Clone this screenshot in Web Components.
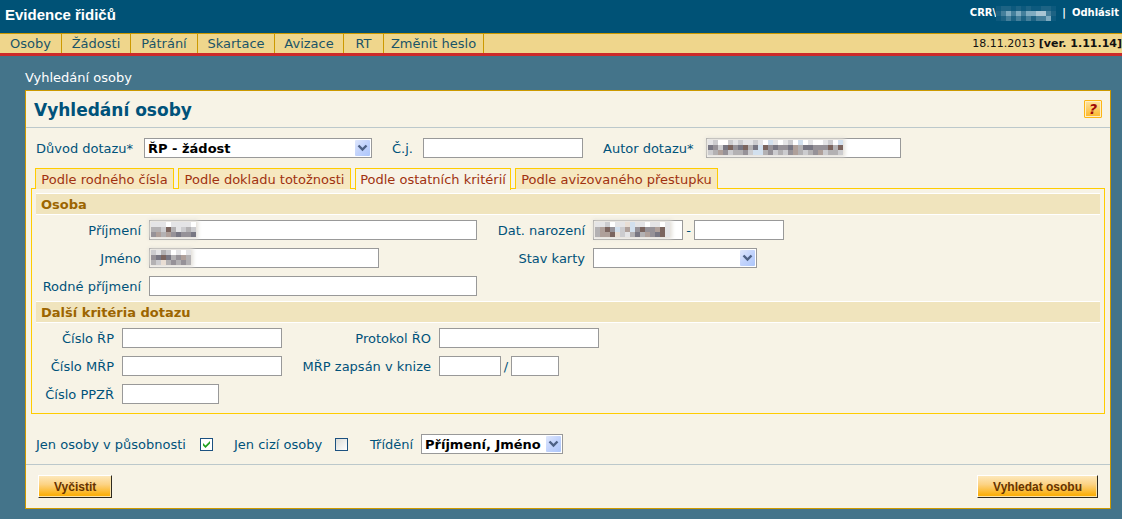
<!DOCTYPE html>
<html lang="cs">
<head>
<meta charset="utf-8">
<title>Evidence řidičů</title>
<style>
  html { background: #44748a; }
  body { margin: 0; font: 13px/18px "DejaVu Sans", Verdana, sans-serif; color: #00527a; }
</style>
</head>
<body>
<driver-app></driver-app>
<script>
const define = (name, html, setup) => {
  const tpl = document.createElement('template');
  tpl.innerHTML = '<style>*{box-sizing:border-box}</style>' + html;
  customElements.define(name, class extends HTMLElement {
    constructor() {
      super();
      this.attachShadow({ mode: 'open' }).append(tpl.content.cloneNode(true));
    }
    connectedCallback() { if (setup && !this.ready) { this.ready = true; setup(this, this.shadowRoot); } }
  });
};

/* Anonymised value: 5px mosaic cells, rows separated by "/" in the cells attribute */
const shades = {
  ' ': 'none', a: '#ffffff', b: '#e4e4e6', c: '#cccccf', d: '#b3b1b3', e: '#969298',
  f: '#787783', g: '#7b655f', h: '#d2e0ee', i: '#afa09a', j: '#e9ded4',
  p: '#1d6384', q: '#447f9b', r: '#7fabc0', s: '#a9c5d3', t: '#0d5a7e'
};
define('redacted-value', `
<style>
  :host { display: block; pointer-events: none; }
  :host([halo]) { background: rgb(240 240 239 / 90%); box-shadow: 0 0 4px 2px #e2dfd8; }
  svg { display: block; }
</style><svg aria-hidden="true" shape-rendering="crispEdges"></svg>`, (el, root) => {
  const rows = el.getAttribute('cells').split('/');
  const svg = root.querySelector('svg');
  svg.setAttribute('width', rows[0].length * 5);
  svg.setAttribute('height', rows.length * 5);
  svg.innerHTML = rows.map((row, y) => [...row].map((k, x) =>
    `<rect x="${x * 5}" y="${y * 5}" width="5" height="5" fill="${shades[k]}"/>`).join('')).join('');
});

define('app-header', `
<style>
  :host { display: flex; justify-content: space-between; align-items: flex-start; height: 33px; padding: 6px 3px 0 5px; background: #005276; color: #fff; }
  h1 { margin: 0; font: bold 15px/18px "Liberation Sans", Arial, sans-serif; }
  .user { display: flex; font-weight: bold; font-size: 10px; line-height: 14px; }
  redacted-value { margin-right: 6px; }
  a { color: inherit; text-decoration: none; margin-left: 6px; }
</style>
<h1>Evidence řidičů</h1>
<div class="user"><span>CRR\\</span><redacted-value cells="tpptptpttppt/pqrqrqrrssqp/tpqpqpqpqqrt"></redacted-value><span>|</span><a href="#logout">Odhlásit</a></div>`);

define('nav-item', `
<style>
  :host { display: block; border-right: 1px solid #c90; }
  a { display: block; text-align: center; white-space: nowrap; line-height: 19px; color: #1a5468; text-decoration: none; }
</style><a href="#"><slot></slot></a>`);

define('app-nav', `
<style>
  :host { display: flex; justify-content: space-between; border-top: 1px solid #c90; border-bottom: 3px solid #cc2a2a; background: #efd68c; }
  nav { display: grid; grid-template-columns: 62px 69px 67px 77px 69px 40px 100px; }
  .version { color: #111; font-size: 11px; line-height: 19px; }
</style>
<nav><nav-item>Osoby</nav-item><nav-item>Žádosti</nav-item><nav-item>Pátrání</nav-item><nav-item>Skartace</nav-item><nav-item>Avizace</nav-item><nav-item>RT</nav-item><nav-item>Změnit heslo</nav-item></nav>
<div class="version">18.11.2013 <b>[ver. 1.11.14]</b></div>`);

/* Text field: label and one input, or two inputs joined by a separator */
define('text-field', `
<style>
  :host { display: contents; }
  label { justify-self: var(--label-align, end); white-space: nowrap; height: 20px; line-height: 22px; }
  .control { display: flex; justify-self: start; height: 20px; line-height: 22px; position: relative; }
  input { height: 20px; border: 1px solid #999; border-radius: 0; background: #fff; margin: 0; padding: 0 3px; font: inherit; outline: none; }
  .sep { width: var(--sep, 11px); text-align: center; }
  ::slotted(*) { position: absolute; left: 2px; top: 2px; }
</style>
<label for="i"></label><div class="control"><input id="i" type="text"><slot></slot></div>`, (el, root) => {
  const label = el.getAttribute('label');
  root.querySelector('label').textContent = label;
  const input = root.querySelector('input');
  const [w1, w2] = el.getAttribute('widths').split(' ');
  input.style.width = w1 + 'px';
  if (w2) {
    const sep = document.createElement('span');
    sep.className = 'sep';
    sep.textContent = el.getAttribute('separator');
    const second = document.createElement('input');
    second.type = 'text';
    second.style.width = w2 + 'px';
    second.setAttribute('aria-label', label + ' 2');
    root.querySelector('.control').append(sep, second);
  }
});

define('select-field', `
<style>
  :host { display: contents; }
  label { justify-self: var(--label-align, end); white-space: nowrap; height: 20px; line-height: 22px; }
  .control { position: relative; justify-self: start; }
  select { display: block; appearance: none; width: 100%; height: 20px; border: 1px solid #999; border-radius: 0; background: #fff; color: #000; margin: 0; padding: 1px 18px 0 3px; font: bold 13px/17px "DejaVu Sans", Verdana, sans-serif; outline: none; }
  svg { position: absolute; right: 2px; top: 2px; pointer-events: none; }
</style>
<label for="s"></label><div class="control"><select id="s"><option></option></select>
<svg width="15" height="16" viewBox="0 0 15 16" aria-hidden="true">
  <defs><linearGradient id="g" x2="1" y2="1"><stop offset="0" stop-color="#dfe7fc"/><stop offset=".5" stop-color="#c2d3fc"/><stop offset="1" stop-color="#adc6fa"/></linearGradient></defs>
  <rect width="15" height="16" rx="1" fill="url(#g)"/>
  <path d="M3.500 5.500L7.500 9.500L11.500 5.500" fill="none" stroke="#4d6185" stroke-width="2.400"/>
</svg></div>`, (el, root) => {
  root.querySelector('label').textContent = el.getAttribute('label');
  root.querySelector('option').textContent = el.getAttribute('value') || '';
  root.querySelector('.control').style.width = el.getAttribute('width') + 'px';
});

define('check-field', `
<style>
  :host { display: contents; }
  label { white-space: nowrap; height: 20px; line-height: 22px; }
  .box { position: relative; width: 13px; height: 13px; }
  input { display: block; appearance: none; width: 13px; height: 13px; margin: 0; border: 1px solid #1c5180; background: linear-gradient(135deg, #dcdcd7, #fff); }
  svg { position: absolute; left: 3px; top: 3px; display: none; pointer-events: none; }
  input:checked { background: #fff; }
  input:checked + svg { display: block; }
</style>
<label for="c"></label><span class="box"><input id="c" type="checkbox"><svg width="7" height="7" viewBox="0 0 7 7" aria-hidden="true"><path d="M0 2L2.500 4.500L7 0V2.500L2.500 7L0 4.500Z" fill="#21a121"/></svg></span>`, (el, root) => {
  root.querySelector('label').textContent = el.getAttribute('label');
  root.querySelector('input').checked = el.hasAttribute('checked');
});

define('tab-button', `
<style>
  :host { display: block; }
  button { display: block; width: 100%; height: 21px; margin: 0; padding: 2px 0 0; border: 1px solid #fc0; border-bottom: 0; border-radius: 0; background: #f6e8c0; color: #a03210; font: 13px/18px "DejaVu Sans", Verdana, sans-serif; white-space: nowrap; }
  :host([active]) { position: relative; }
  :host([active]) button { background: #f7f3e6; padding-bottom: 1px; height: 22px; }
</style><button type="button" role="tab"><slot></slot></button>`, (el, root) =>
  root.querySelector('button').setAttribute('aria-selected', el.hasAttribute('active')));

define('form-section', `
<style>
  :host { display: block; }
  h3 { margin: 0; padding: 1px 5px 0; border: solid #fff; border-width: 1px 0; background: #f0e4bd; color: #9c6500; font-size: 13px; line-height: 19px; }
  .grid { display: grid; grid-template-columns: var(--columns); gap: 8px; padding: 5px 0; justify-content: start; }
</style><h3></h3><div class="grid"><slot></slot></div>`, (el, root) => {
  root.querySelector('h3').textContent = el.getAttribute('heading');
});

define('action-button', `
<style>
  :host { display: block; }
  button { display: block; height: 23px; margin: 0; padding: 0 15px; border: 1px solid; border-color: #fff #2e2a20 #2e2a20 #fff; border-radius: 0; box-shadow: inset -1px -1px #fbe3a8; background: linear-gradient(#fde8bb, #fcd384 40%, #fbaf0c 90%); color: #663300; font: bold 12px/20px "Liberation Sans", Arial, sans-serif; white-space: nowrap; }
</style><button type="button"><slot></slot></button>`);

define('help-button', `
<style>
  :host { display: block; }
  button { display: block; width: 18px; height: 18px; margin: 0; padding: 0; border: 1px solid #fdb515; border-radius: 1px; box-shadow: inset 0 0 0 1px #fdeec4; background: linear-gradient(#fde3a0, #fcb62a); color: #a00808; font: italic bold 14px/16px "DejaVu Sans", Verdana, sans-serif; }
</style><button type="button" aria-label="Nápověda">?</button>`);

define('search-panel', `
<style>
  :host { display: block; border: 1px solid #c90; background: #f7f3e6; }
  header { display: flex; justify-content: space-between; align-items: center; height: 37px; padding: 0 8px; border-bottom: 1px solid #bcc8cb; }
  h2 { margin: 0; padding-top: 2px; font-size: 17px; line-height: 24px; }
  .query { --label-align: start; display: grid; grid-template-columns: 100px 240px 23px 172px 95px auto; justify-content: start; gap: 8px; padding: 10px; }
  .tabs { display: grid; grid-template-columns: 139px 173px 156px 203px; gap: 4px; height: 20px; margin: 0 9px; }
  .pane { margin: 0 5px; padding: 4px; border: 1px solid #fc0; }
  .person { --columns: 105px 328px 100px auto; }
  .other { --columns: 78px 160px 141px auto; --sep: 10px; }
  .filters { --label-align: start; display: grid; grid-template-columns: 155px 25px 92px 26px 42px auto; justify-content: start; align-items: center; gap: 9px; padding: 20px 10px 10px; border-bottom: 1px solid #bcc8cb; }
  footer { display: flex; justify-content: space-between; padding: 10px 12px; }
</style>
<header><h2>Vyhledání osoby</h2><help-button></help-button></header>
<form>
  <div class="query">
    <select-field label="Důvod dotazu*" value="ŘP - žádost" width="228"></select-field>
    <text-field label="Č.j." widths="160"></text-field>
    <text-field label="Autor dotazu*" widths="195"><redacted-value halo cells="bcaacbcbbcbahbabcahabaabcah/fecfgefgdfhgefeefidffeeegdgd/cdiecddechhdecdceidcdeicddch"></redacted-value></text-field>
  </div>
  <div class="tabs" role="tablist"><tab-button>Podle rodného čísla</tab-button><tab-button>Podle dokladu totožnosti</tab-button><tab-button active>Podle ostatních kritérií</tab-button><tab-button>Podle avizovaného přestupku</tab-button></div>
  <div class="pane">
    <form-section class="person" heading="Osoba">
      <text-field label="Příjmení" widths="328"><redacted-value halo cells="bbbabbbba/ddcgdbcdc/eidiefeef"></redacted-value></text-field>
      <text-field label="Dat. narození" widths="90 90" separator="-"><redacted-value halo cells="bbcabbjhbbabbab/digehcihegeeigb/diigjcbdfdiefgb"></redacted-value></text-field>
      <text-field label="Jméno" widths="230"><redacted-value halo cells="cbdcabab/efgfdeid/dcjdeded"></redacted-value></text-field>
      <select-field label="Stav karty" width="164"></select-field>
      <text-field label="Rodné příjmení" widths="328"></text-field>
    </form-section>
    <form-section class="other" heading="Další kritéria dotazu">
      <text-field label="Číslo ŘP" widths="160"></text-field>
      <text-field label="Protokol ŘO" widths="160"></text-field>
      <text-field label="Číslo MŘP" widths="160"></text-field>
      <text-field label="MŘP zapsán v knize" widths="62 48" separator="/"></text-field>
      <text-field label="Číslo PPZŘ" widths="97"></text-field>
    </form-section>
  </div>
  <div class="filters">
    <check-field label="Jen osoby v působnosti" checked></check-field>
    <check-field label="Jen cizí osoby"></check-field>
    <select-field label="Třídění" value="Příjmení, Jméno" width="142"></select-field>
  </div>
  <footer><action-button>Vyčistit</action-button><action-button>Vyhledat osobu</action-button></footer>
</form>`);

define('driver-app', `
<style>
  :host { display: block; }
  main { padding: 13px 11px 10px 25px; }
  .crumb { margin: 0 0 3px; color: #fff; line-height: 18px; }
</style>
<app-header></app-header>
<app-nav></app-nav>
<main><p class="crumb">Vyhledání osoby</p><search-panel></search-panel></main>`);
</script>
</body>
</html>
